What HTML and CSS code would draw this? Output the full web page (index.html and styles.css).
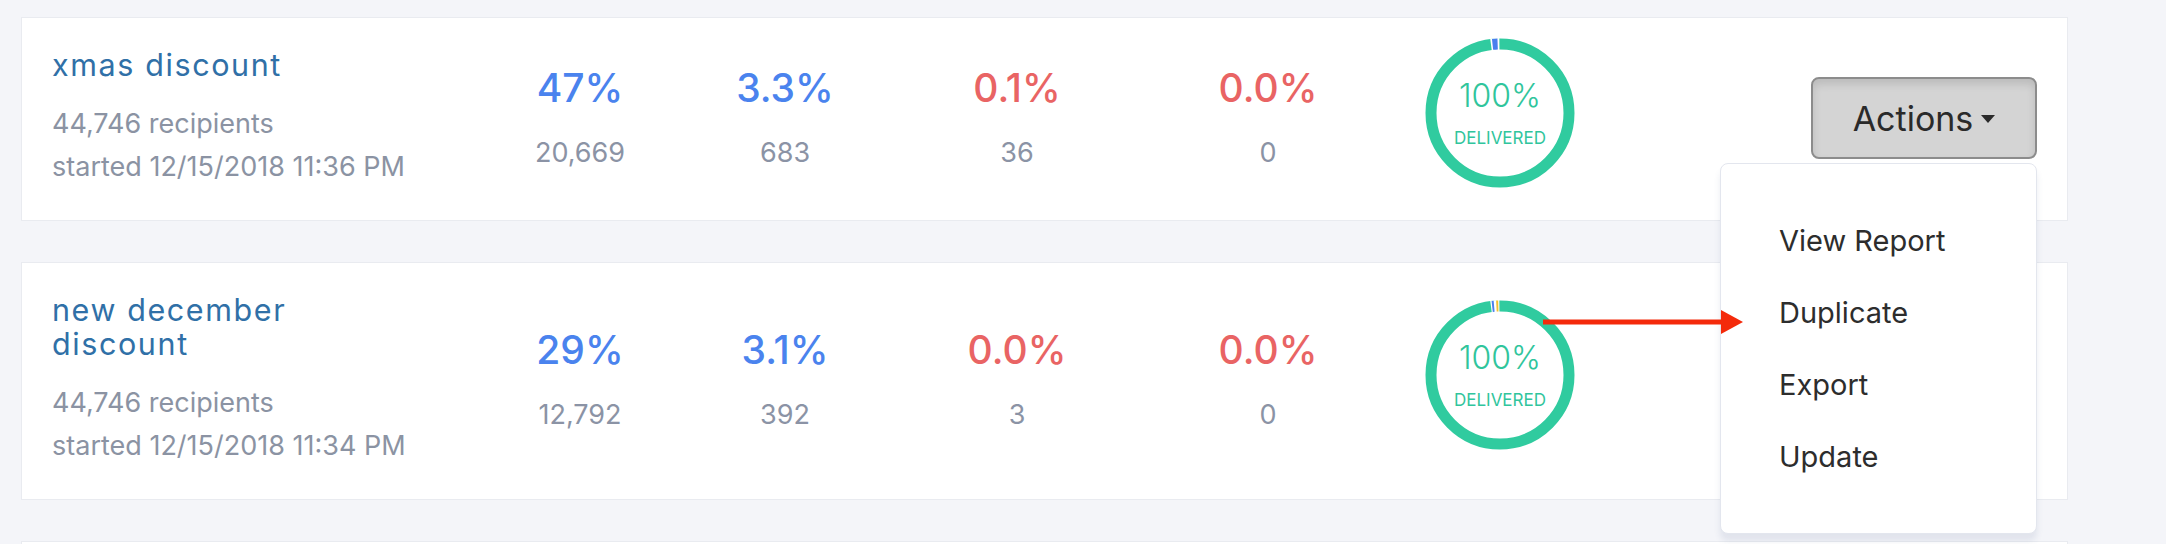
FILE: index.html
```html
<!DOCTYPE html>
<html>
<head>
<meta charset="utf-8">
<link rel="stylesheet" href="styles.css">
</head>
<body>
<div class="list">
  <div class="card">
    <div class="name">
      <div class="title">xmas discount</div>
      <div class="meta">44,746 recipients</div>
      <div class="meta">started 12/15/2018 11:36 PM</div>
    </div>
    <div class="stat"><div class="big blue">47%</div><div class="small">20,669</div></div>
    <div class="stat"><div class="big blue">3.3%</div><div class="small">683</div></div>
    <div class="stat"><div class="big red">0.1%</div><div class="small">36</div></div>
    <div class="stat"><div class="big red">0.0%</div><div class="small">0</div></div>
    <div class="donut-col">
      <div class="donut">
        <svg class="ring" width="150" height="150" viewBox="0 0 150 150">
          <circle cx="75" cy="75" r="69" fill="none" stroke="#30cb9f" stroke-width="11"/>
          <circle cx="75" cy="75" r="69" fill="none" stroke="#ffffff" stroke-width="12" stroke-dasharray="8.5 500" transform="rotate(-97.5 75 75)"/>
          <circle cx="75" cy="75" r="69" fill="none" stroke="#4a80ee" stroke-width="11" stroke-dasharray="5.2 500" transform="rotate(-96.2 75 75)"/>
        </svg>
        <div class="donut-text"><span class="pct">100%</span><span class="lbl">DELIVERED</span></div>
      </div>
    </div>
    <div class="actions">
      <div class="dropdown">
        <button class="btn">Actions <span class="caret"></span></button>
        <ul class="menu">
          <li>View Report</li>
          <li>Duplicate</li>
          <li>Export</li>
          <li>Update</li>
        </ul>
      </div>
    </div>
  </div>

  <div class="card">
    <div class="name">
      <div class="title">new december discount</div>
      <div class="meta">44,746 recipients</div>
      <div class="meta">started 12/15/2018 11:34 PM</div>
    </div>
    <div class="stat"><div class="big blue">29%</div><div class="small">12,792</div></div>
    <div class="stat"><div class="big blue">3.1%</div><div class="small">392</div></div>
    <div class="stat"><div class="big red">0.0%</div><div class="small">3</div></div>
    <div class="stat"><div class="big red">0.0%</div><div class="small">0</div></div>
    <div class="donut-col">
      <div class="donut">
        <svg class="ring" width="150" height="150" viewBox="0 0 150 150">
          <circle cx="75" cy="75" r="69" fill="none" stroke="#30cb9f" stroke-width="11"/>
          <circle cx="75" cy="75" r="69" fill="none" stroke="#ffffff" stroke-width="12" stroke-dasharray="8.5 500" transform="rotate(-97.5 75 75)"/>
          <circle cx="75" cy="75" r="69" fill="none" stroke="#4a80ee" stroke-width="11" stroke-dasharray="2 500" transform="rotate(-96.5 75 75)"/>
          <circle cx="75" cy="75" r="69" fill="none" stroke="#f2c230" stroke-width="11" stroke-dasharray="2 500" transform="rotate(-93 75 75)"/>
        </svg>
        <div class="donut-text"><span class="pct">100%</span><span class="lbl">DELIVERED</span></div>
      </div>
    </div>
    <div class="actions"></div>
  </div>

  <div class="card card-empty"></div>

  <svg class="arrow" width="210" height="30" viewBox="0 0 210 30">
    <rect x="0" y="12.5" width="184" height="5" fill="#f42a0b"/>
    <polygon points="178,3 200,15 178,27" fill="#f42a0b"/>
  </svg>
</div>
</body>
</html>
```

FILE: styles.css
```css
html, body {
  margin: 0;
  padding: 0;
  height: 544px;
  overflow: hidden;
  background: #f4f5f9;
  font-family: "Inter", "Open Sans", sans-serif;
}

.list {
  position: relative;
  box-sizing: border-box;
  width: 2047px;
  height: 544px;
  overflow: hidden;
  margin-left: 21px;
  padding-top: 17px;
  display: flex;
  flex-direction: column;
  gap: 41px;
}

.card {
  flex-shrink: 0;
  background: #ffffff;
  border: 1px solid #e9ebf0;
  padding: 30px 30px 32px 30px;
  display: grid;
  grid-template-columns: 426px 204px 206px 258px 244px 220px 1fr;
  align-items: center;
}

.card-empty {
  height: 140px;
}

.name {
  display: flex;
  flex-direction: column;
}

.title {
  font-size: 30.5px;
  line-height: 34px;
  letter-spacing: 1.6px;
  color: #3070a7;
  max-width: 310px;
  margin-bottom: 20px;
}

.meta {
  font-size: 27px;
  line-height: 43px;
  color: #8b93a3;
  white-space: nowrap;
}

.stat {
  display: flex;
  flex-direction: column;
  align-items: center;
}

.big {
  font-size: 39px;
  line-height: 50px;
  font-weight: 500;
}

.blue { color: #4a83ee; }
.red { color: #e96464; }

.small {
  margin-top: 20px;
  font-size: 27px;
  line-height: 40px;
  color: #8b93a5;
}

.donut-col {
  display: flex;
  justify-content: center;
}

.donut {
  display: grid;
  width: 150px;
  height: 150px;
  margin: -14px 0 -4px 0;
}

.ring, .donut-text {
  grid-area: 1 / 1;
}

.donut-text {
  display: flex;
  flex-direction: column;
  align-items: center;
  justify-content: center;
  color: #30c59c;
}

.pct {
  font-size: 32px;
  line-height: 40px;
  font-weight: 300;
}

.lbl {
  margin-top: 10px;
  font-size: 17px;
  line-height: 24px;
}

.actions {
  display: flex;
  justify-content: flex-end;
}

.dropdown {
  position: relative;
}

.btn {
  width: 226px;
  height: 82px;
  background: #d4d4d4;
  border: 2px solid #8c8c8c;
  border-radius: 8px;
  box-shadow: inset 0 5px 8px rgba(0, 0, 0, 0.12);
  font-family: inherit;
  font-size: 34px;
  color: #2a2a2a;
  display: flex;
  align-items: center;
  justify-content: center;
  gap: 8px;
  padding: 0;
}

.caret {
  width: 0;
  height: 0;
  border-top: 8px solid #2a2a2a;
  border-left: 7px solid transparent;
  border-right: 7px solid transparent;
  margin-top: 2px;
}

.menu {
  position: absolute;
  right: 0;
  top: 86px;
  width: 317px;
  box-sizing: border-box;
  margin: 0;
  padding: 41px 0 40px 0;
  list-style: none;
  background: #ffffff;
  border: 1px solid #e3e6ee;
  border-radius: 8px;
  box-shadow: 0 7px 6px rgba(60, 80, 130, 0.1);
  z-index: 5;
}

.menu li {
  padding-left: 58px;
  font-size: 29px;
  line-height: 72px;
  color: #2d2d2d;
}

.arrow {
  position: absolute;
  left: 1522px;
  top: 307px;
  z-index: 10;
}
```
